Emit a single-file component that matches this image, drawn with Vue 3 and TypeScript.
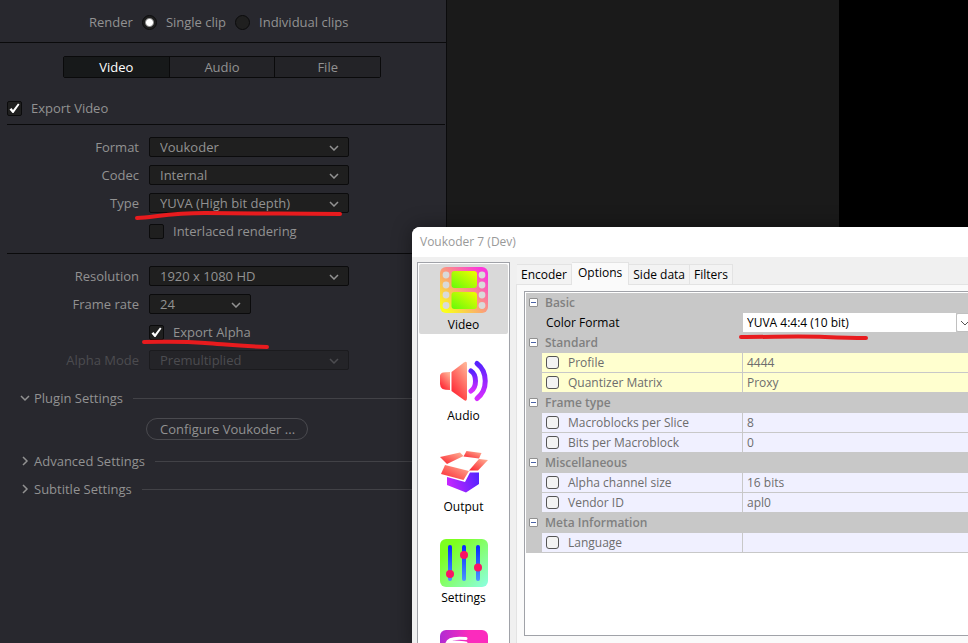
<script setup lang="ts">
import { ref } from 'vue'

interface Field {
  label: string
  value: string
}
interface Group {
  title: string
  tone: string
  fields: Field[]
}

const clipMode = ref('single')
const renderTab = ref('Video')
const renderTabs = ['Video', 'Audio', 'File']
const exportVideo = ref(true)
const interlaced = ref(false)
const exportAlpha = ref(true)

const encoderTab = ref('Options')
const encoderTabs = ['Encoder', 'Options', 'Side data', 'Filters']
const section = ref('Video')
const sections = ['Video', 'Audio', 'Output', 'Settings', 'Info']

const groups: Group[] = [
  {
    title: 'Standard',
    tone: 'yellow',
    fields: [
      { label: 'Profile', value: '4444' },
      { label: 'Quantizer Matrix', value: 'Proxy' },
    ],
  },
  {
    title: 'Frame type',
    tone: 'blue',
    fields: [
      { label: 'Macroblocks per Slice', value: '8' },
      { label: 'Bits per Macroblock', value: '0' },
    ],
  },
  {
    title: 'Miscellaneous',
    tone: 'blue',
    fields: [
      { label: 'Alpha channel size', value: '16 bits' },
      { label: 'Vendor ID', value: 'apl0' },
    ],
  },
  {
    title: 'Meta Information',
    tone: 'blue',
    fields: [{ label: 'Language', value: '' }],
  },
]
</script>

<template>
  <div class="desktop">
    <main class="render">
      <div class="mode">
        <span>Render</span>
        <label><input v-model="clipMode" type="radio" name="clip" value="single" />Single clip</label>
        <label><input v-model="clipMode" type="radio" name="clip" value="individual" />Individual clips</label>
      </div>

      <nav class="segments">
        <button
          v-for="t in renderTabs"
          :key="t"
          type="button"
          :class="{ on: t === renderTab }"
          @click="renderTab = t"
        >{{ t }}</button>
      </nav>

      <div class="export">
        <label class="tick"><input v-model="exportVideo" type="checkbox" />Export Video</label>
      </div>

      <section class="block">
        <div class="row">
          <label for="format">Format</label>
          <div class="pick"><select id="format"><option>Voukoder</option></select><svg viewBox="0 0 10 6"><path d="M1 1l4 4 4-4" /></svg></div>
        </div>
        <div class="row">
          <label for="codec">Codec</label>
          <div class="pick"><select id="codec"><option>Internal</option></select><svg viewBox="0 0 10 6"><path d="M1 1l4 4 4-4" /></svg></div>
        </div>
        <div class="row">
          <label for="type">Type</label>
          <div class="pick"><select id="type"><option>YUVA (High bit depth)</option></select><svg viewBox="0 0 10 6"><path d="M1 1l4 4 4-4" /></svg></div>
        </div>
        <div class="row">
          <label class="tick second"><input v-model="interlaced" type="checkbox" />Interlaced rendering</label>
        </div>
      </section>

      <section class="block">
        <div class="row">
          <label for="resolution">Resolution</label>
          <div class="pick"><select id="resolution"><option>1920 x 1080 HD</option></select><svg viewBox="0 0 10 6"><path d="M1 1l4 4 4-4" /></svg></div>
        </div>
        <div class="row">
          <label for="rate">Frame rate</label>
          <div class="pick short"><select id="rate"><option>24</option></select><svg viewBox="0 0 10 6"><path d="M1 1l4 4 4-4" /></svg></div>
        </div>
        <div class="row">
          <label class="tick second"><input v-model="exportAlpha" type="checkbox" />Export Alpha</label>
        </div>
        <div class="row off">
          <label for="alpha">Alpha Mode</label>
          <div class="pick"><select id="alpha" disabled><option>Premultiplied</option></select><svg viewBox="0 0 10 6"><path d="M1 1l4 4 4-4" /></svg></div>
        </div>
      </section>

      <section class="folds">
        <button type="button" class="fold"><svg viewBox="0 0 10 10"><path d="M1 3l4 4 4-4" /></svg><span>Plugin Settings</span></button>
        <button type="button" class="configure">Configure Voukoder ...</button>
        <button type="button" class="fold"><svg viewBox="0 0 10 10"><path d="M3 1l4 4-4 4" /></svg><span>Advanced Settings</span></button>
        <button type="button" class="fold"><svg viewBox="0 0 10 10"><path d="M3 1l4 4-4 4" /></svg><span>Subtitle Settings</span></button>
      </section>
    </main>

    <div class="viewer"></div>
    <div class="void"></div>

    <section class="dialog">
      <header>Voukoder 7 (Dev)</header>
      <div class="body">
        <nav class="sections">
          <button
            v-for="s in sections"
            :key="s"
            type="button"
            :aria-label="s"
            :class="{ on: s === section }"
            @click="section = s"
          >
            <svg v-if="s === 'Video'" viewBox="0 0 48 48">
              <defs>
                <linearGradient id="film" x1="0" y1="1" x2="1" y2="0">
                  <stop offset="0.08" stop-color="#faff1c" /><stop offset="0.5" stop-color="#fb9b7d" /><stop offset="0.9" stop-color="#fc38da" />
                </linearGradient>
                <linearGradient id="frame" x1="0" y1="1" x2="1" y2="0">
                  <stop offset="0" stop-color="#62fb0a" /><stop offset="1" stop-color="#f5fc00" />
                </linearGradient>
              </defs>
              <rect y="1" width="48" height="46" rx="6" fill="url(#film)" />
              <rect x="11.5" y="5" width="25.500" height="17" rx="3" fill="url(#frame)" />
              <rect x="11.5" y="26" width="25.500" height="17" rx="3" fill="url(#frame)" />
              <g fill="#d9d9d9">
                <circle cx="6" cy="9" r="3.4" /><circle cx="6" cy="19" r="3.4" /><circle cx="6" cy="29" r="3.4" /><circle cx="6" cy="39.500" r="3.4" />
                <circle cx="42" cy="9" r="3.4" /><circle cx="42" cy="19" r="3.4" /><circle cx="42" cy="29" r="3.4" /><circle cx="42" cy="39.500" r="3.4" />
              </g>
            </svg>
            <svg v-else-if="s === 'Audio'" viewBox="0 0 48 48">
              <defs>
                <linearGradient id="cone" x1="0.2" y1="1" x2="0.8" y2="0">
                  <stop offset="0.15" stop-color="#ff333c" /><stop offset="1" stop-color="#ffb194" />
                </linearGradient>
                <linearGradient id="wave" x1="0" y1="1" x2="0" y2="0">
                  <stop offset="0" stop-color="#d62dff" /><stop offset="1" stop-color="#5522ff" />
                </linearGradient>
              </defs>
              <path d="M3 15.500Q5 15 10 15V33Q5 33 2.500 32Q0 30 0 27V19Q0 16.500 3 15.500Z" fill="url(#cone)" />
              <path d="M11.500 15L24 5.500Q27 3.500 27 7V41Q27 45 24 43L11.500 34Z" fill="url(#cone)" />
              <g fill="none" stroke="url(#wave)" stroke-linecap="round">
                <path d="M31 14C37 18 37 30 31 34" stroke-width="5" />
                <path d="M37 6.500C48 15 48 33 37 41.500" stroke-width="5" />
              </g>
            </svg>
            <svg v-else-if="s === 'Output'" viewBox="0 0 48 48">
              <defs>
                <linearGradient id="flap" x1="0" y1="1" x2="1" y2="0">
                  <stop offset="0.1" stop-color="#fb3038" /><stop offset="1" stop-color="#ffb598" />
                </linearGradient>
                <linearGradient id="box" x1="0" y1="0.6" x2="1" y2="0.4">
                  <stop offset="0" stop-color="#c927ff" /><stop offset="1" stop-color="#5722ff" />
                </linearGradient>
              </defs>
              <path d="M7 29L25 34L30 24.500H39V36L26 44.500L7 37Z" fill="url(#box)" />
              <path d="M0 9L20 4.500L23.500 8L7 16Z" fill="url(#flap)" />
              <path d="M26.500 3L41.500 5L39 10.500L23.500 8.500Z" fill="url(#flap)" />
              <path d="M5 17L29 23L23.500 32L1 26Z" fill="url(#flap)" />
              <path d="M39 11L48 12L38 22.500H29Z" fill="url(#flap)" />
            </svg>
            <svg v-else-if="s === 'Settings'" viewBox="0 0 48 48">
              <defs>
                <linearGradient id="board" x1="0" y1="0" x2="1" y2="1">
                  <stop offset="0.2" stop-color="#7dff1e" /><stop offset="0.5" stop-color="#84ff69" /><stop offset="1" stop-color="#8cffe4" />
                </linearGradient>
                <linearGradient id="rail" x1="0" y1="0" x2="0" y2="1">
                  <stop offset="0" stop-color="#0726ff" /><stop offset="1" stop-color="#4996ff" />
                </linearGradient>
              </defs>
              <rect width="48" height="48" rx="6" fill="url(#board)" />
              <rect x="8" y="6" width="4" height="36" rx="2" fill="url(#rail)" />
              <rect x="22" y="6" width="4" height="36" rx="2" fill="url(#rail)" />
              <rect x="36" y="6" width="4" height="36" rx="2" fill="url(#rail)" />
              <g fill="#fb1463"><circle cx="10" cy="35" r="4" /><circle cx="24" cy="16" r="4" /><circle cx="38" cy="28.500" r="4" /></g>
            </svg>
            <svg v-else viewBox="0 0 48 48">
              <defs>
                <linearGradient id="info" x1="0" y1="0" x2="1" y2="0">
                  <stop offset="0" stop-color="#b02ad3" /><stop offset="0.6" stop-color="#fb2bbd" />
                </linearGradient>
              </defs>
              <rect width="48" height="48" rx="6" fill="url(#info)" />
              <path d="M26 8.500C16 7.500 8 9 7 13C12 11 18 12 26 13" fill="none" stroke="#fff" stroke-width="3" stroke-linecap="round" />
            </svg>
            <span v-if="s !== 'Info'">{{ s }}</span>
          </button>
        </nav>

        <div class="content">
          <nav class="tabs">
            <button
              v-for="t in encoderTabs"
              :key="t"
              type="button"
              :class="{ on: t === encoderTab }"
              @click="encoderTab = t"
            >{{ t }}</button>
          </nav>
          <div class="sheet">
            <div class="frame">
              <table>
                <colgroup><col class="gutter" /><col class="name" /><col /></colgroup>
                <tbody>
                  <tr class="group">
                    <td><button type="button" class="minus" aria-label="Collapse"></button></td>
                    <th colspan="2">Basic</th>
                  </tr>
                  <tr class="group chosen">
                    <td></td>
                    <td><label for="color">Color Format</label></td>
                    <td class="combo">
                      <div>
                        <select id="color"><option>YUVA 4:4:4 (10 bit)</option></select>
                        <span><svg viewBox="0 0 10 6"><path d="M1 1l4 4 4-4" /></svg></span>
                      </div>
                    </td>
                  </tr>
                  <template v-for="g in groups" :key="g.title">
                    <tr class="group">
                      <td><button type="button" class="minus" aria-label="Collapse"></button></td>
                      <th colspan="2">{{ g.title }}</th>
                    </tr>
                    <tr v-for="f in g.fields" :key="f.label" :class="g.tone">
                      <td></td>
                      <td><label><input type="checkbox" />{{ f.label }}</label></td>
                      <td>{{ f.value }}</td>
                    </tr>
                  </template>
                </tbody>
              </table>
            </div>
          </div>
        </div>
      </div>
    </section>

    <svg class="marks" viewBox="0 0 968 643" width="968" height="643">
      <path d="M137 218C155 217 170 213 205 213S300 214 340 214" />
      <path d="M144 342C165 342 178 341 205 343S240 346 267 347" />
      <path d="M741 337C775 337 800 336 825 337S850 338 866 338" />
    </svg>
  </div>
</template>

<style>
body {
  margin: 0;
  background: #1a1a1a;
}
</style>

<style scoped>
* {
  box-sizing: border-box;
}
button,
select,
input {
  margin: 0;
  font: inherit;
  color: inherit;
}
button {
  padding: 0;
  border: 0;
  background: none;
}
select,
input {
  appearance: none;
}
.desktop {
  position: relative;
  display: flex;
  height: 100vh;
  overflow: hidden;
  background: #1a1a1a;
  font: 13px/20px "Open Sans", sans-serif;
  color: #929292;
}
.render {
  flex: 0 0 447px;
  border-right: 1px solid #0b0b0c;
  background: #28282e;
}
.viewer {
  flex: 76;
  background: #1a1a1a;
}
.void {
  flex: 25;
  background: #000;
}

/* Render settings */
.mode {
  display: flex;
  align-items: center;
  gap: 9px;
  height: 43px;
  padding: 2px 0 0 89px;
  border-bottom: 1px solid #0a0a0b;
}
.mode label {
  display: flex;
  align-items: center;
  gap: 9px;
}
.mode input {
  width: 15px;
  height: 15px;
  border: 1px solid #0b0b0c;
  border-radius: 50%;
  background: #1f1f1f;
}
.mode input:checked {
  background: radial-gradient(circle, #fff 3px, #1f1f1f 5px);
}
.segments {
  display: flex;
  width: 318px;
  height: 22px;
  margin: 13px 0 0 63px;
  border: 1px solid #0a0a0b;
  border-radius: 2px;
}
.segments button {
  flex: 1;
  background: #232327;
}
.segments button + button {
  border-left: 1px solid #0a0a0b;
}
.segments .on {
  background: #17191a;
  color: #fff;
}
.export {
  height: 47px;
  margin: 0 1px 0 7px;
  padding-top: 20px;
  border-bottom: 1px solid #0a0a0b;
}
.tick {
  display: flex;
  align-items: center;
  gap: 9px;
}
.tick input {
  width: 15px;
  height: 15px;
  border: 1px solid #0b0b0c;
  border-radius: 2px;
  background: #1f1f1f;
}
.tick input:checked {
  background: #1f1f1f url("data:image/svg+xml,%3Csvg xmlns='http://www.w3.org/2000/svg' viewBox='0 0 13 13'%3E%3Cpath d='M1.500 7.500L3.500 6L5 8L10 1.500L11.500 2.500L5.500 11H4.500Z' fill='%23fff'/%3E%3C/svg%3E");
}
.block {
  display: grid;
  gap: 8px;
  margin: 0 1px 0 7px;
  padding: 12px 0;
  border-bottom: 1px solid #0a0a0b;
}
.block + .block {
  border-bottom: 0;
}
.row {
  display: grid;
  grid-template-columns: 132px 200px;
  gap: 10px;
  height: 20px;
}
.row > label {
  text-align: right;
}
.row > .second {
  grid-column: 2;
}
.pick {
  display: grid;
  align-items: center;
}
.pick > * {
  grid-area: 1 / 1;
}
.short {
  width: 102px;
}
.pick select {
  width: 100%;
  height: 20px;
  padding: 0 10px;
  border: 1px solid #0b0b0c;
  border-radius: 2px;
  background: #1f1f1f;
  line-height: 18px;
}
.pick svg {
  justify-self: end;
  width: 10px;
  height: 6px;
  margin: 2px 10px 0 0;
  pointer-events: none;
}
.pick svg,
.fold svg {
  fill: none;
  stroke: #929292;
  stroke-width: 1.5;
}
.off {
  color: #4c4c50;
}
.off .pick select {
  border-color: #1b1b1e;
  background: #242428;
  color: #4c4c50;
  opacity: 1;
}
.off .pick svg {
  stroke: #4c4c50;
}
.folds {
  display: flex;
  flex-direction: column;
  align-items: flex-start;
  gap: 8px;
  padding: 6px 0 0 20px;
}
.fold {
  display: flex;
  align-items: center;
  align-self: stretch;
  gap: 4px;
  height: 20px;
}
.fold svg {
  width: 10px;
  height: 10px;
}
.fold::after {
  content: "";
  flex: 1;
  height: 1px;
  margin-left: 6px;
  background: #424247;
}
.configure {
  height: 22px;
  margin: 2px 0 3px 126px;
  padding: 0 12px 0 13px;
  border: 1px solid #4a4a4f;
  border-radius: 11px;
}

/* Floating encoder window */
.dialog {
  position: absolute;
  top: 227px;
  right: -8px;
  bottom: -8px;
  left: 412px;
  display: flex;
  flex-direction: column;
  overflow: hidden;
  border-radius: 8px;
  background: #f0f0f0;
  box-shadow: 0 0 20px rgba(0, 0, 0, 0.4);
  color: #000;
  font-size: 12px;
}
.dialog header {
  flex: none;
  height: 30px;
  padding-left: 8px;
  background: #fff;
  color: #999;
  line-height: 30px;
}
.body {
  display: flex;
  flex: 1;
  gap: 6px;
  min-height: 0;
  padding: 5px 0 0 5px;
}
.sections {
  display: flex;
  flex: none;
  flex-direction: column;
  gap: 21px;
  width: 93px;
  padding: 1px;
  overflow: hidden;
  border: 1px solid #a0a2a8;
  background: #fff;
}
.sections button {
  display: flex;
  flex: none;
  flex-direction: column;
  align-items: center;
  height: 70px;
  padding-top: 2px;
  line-height: 22px;
}
.sections .on {
  border-radius: 2px;
  background: #d9d9d9;
}
.sections svg {
  flex: none;
  width: 48px;
  height: 48px;
}
.content {
  display: flex;
  flex: 1;
  flex-direction: column;
  min-width: 0;
}
.tabs {
  display: flex;
  align-items: flex-end;
  height: 22px;
  padding-left: 1px;
}
.tabs button {
  height: 20px;
  padding: 0 4px;
  border: 1px solid #e3e3e3;
  border-width: 1px 1px 0 0;
  background: #f3f3f3;
}
.tabs .on {
  z-index: 1;
  height: 23px;
  margin-bottom: -1px;
  padding: 0 6px 2px;
  background: #fafafa;
}
.sheet {
  display: flex;
  flex: 1;
  min-height: 0;
  padding: 6px 0 14px 7px;
  border: 1px solid #e3e3e3;
  background: #fafafa;
}
.frame {
  flex: 1;
  padding: 1px;
  border: 1px solid #a0a2a8;
  background: #fff;
}
table {
  width: 100%;
  table-layout: fixed;
  border-spacing: 0;
  color: #6d6d6d;
}
.gutter {
  width: 16px;
}
.name {
  width: 201px;
}
tr {
  height: 20px;
}
td,
th {
  height: 20px;
  padding: 0;
  border-bottom: 1px solid #c8c8c8;
  line-height: 19px;
  text-align: left;
}
td:first-child,
.group > * {
  background: #c8c8c8;
}
th {
  padding-left: 3px;
  color: #808080;
  font-weight: 600;
}
.yellow {
  background: #ffffcf;
}
.blue {
  background: #f0f0ff;
}
td:nth-child(2) {
  border-right: 1px solid #c8c8c8;
}
td:nth-child(3) {
  padding-left: 4px;
}
td label {
  display: flex;
  align-items: center;
  gap: 9px;
  padding-left: 4px;
}
td input {
  width: 13px;
  height: 13px;
  border: 1px solid #555;
  border-radius: 3px;
  background: #f3f3f3;
}
.chosen {
  color: #000;
}
td.combo {
  padding: 0;
}
.combo div {
  display: flex;
  height: 19px;
}
.combo select {
  flex: 1;
  height: 19px;
  padding: 0 4px;
  border: 0;
  background: #fff;
  line-height: 19px;
}
.combo span {
  display: grid;
  place-items: center;
  width: 17px;
  border: 1px solid #c0c0c0;
  border-radius: 2px;
  background: #fff;
}
.combo svg {
  width: 10px;
  height: 6px;
  fill: none;
  stroke: #555;
}
.minus {
  display: block;
  width: 9px;
  height: 9px;
  margin-left: 3px;
  border: 1px solid #919191;
  border-radius: 1px;
  background: linear-gradient(#4b63a7, #4b63a7) center / 5px 1px no-repeat, #fff;
}

/* Red underlines drawn over both windows */
.marks {
  position: absolute;
  top: 0;
  left: 0;
  fill: none;
  stroke: #e81b1e;
  stroke-width: 4;
  stroke-linecap: round;
  pointer-events: none;
}
</style>
